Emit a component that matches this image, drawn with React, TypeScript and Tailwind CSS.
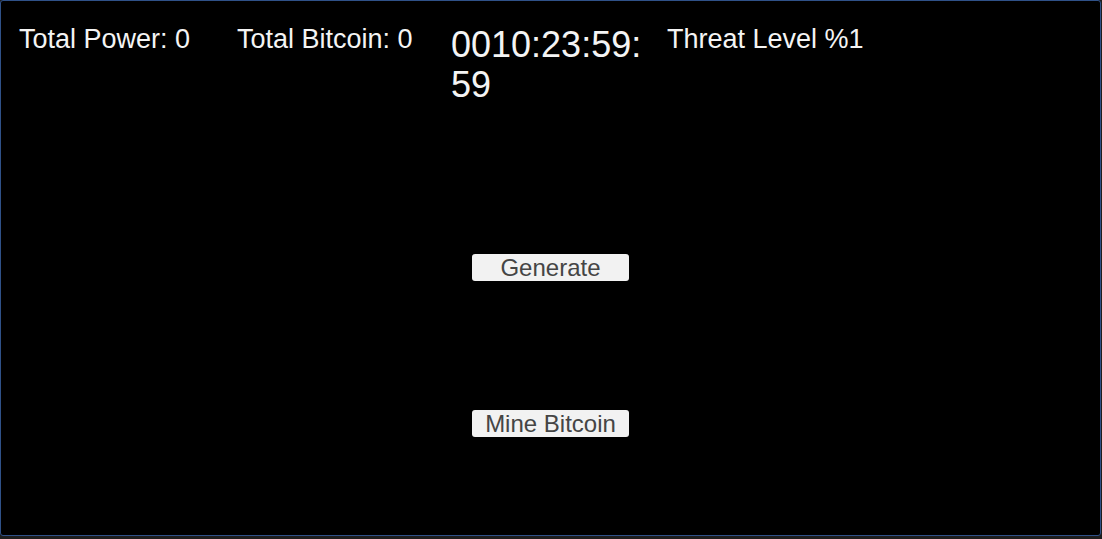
import React from "react";

const App = () => {
  return (
    <div className="w-[1102px] h-[539px] bg-[#1e1e1e] overflow-hidden">
      <div
        className="w-[1101px] h-[536px] bg-black border border-[#2f5188] rounded-[3px] text-[#f4f4f4] flex flex-col"
        style={{ fontFamily: '"Liberation Sans", Arial, sans-serif' }}
      >
        {/* Stats row */}
        <div className="flex items-start pl-[18px] pt-[23px]">
          <div className="w-[218px] text-[27px] leading-[30px]">Total Power: 0</div>
          <div className="w-[214px] text-[27px] leading-[30px]">Total Bitcoin: 0</div>
          <div className="w-[216px] pt-[1px]">
            <div className="w-[200px] text-[36px] leading-[40px] break-all">0010:23:59:59</div>
          </div>
          <div className="text-[27px] leading-[30px]">Threat Level %1</div>
        </div>

        {/* Actions */}
        <div className="flex flex-col items-center mt-[149px] gap-[129px]">
          <button className="w-[157px] h-[27px] bg-[#f2f2f2] rounded-[3px] text-[#454545] text-[24px] leading-[27px]">
            Generate
          </button>
          <button className="w-[157px] h-[27px] bg-[#f2f2f2] rounded-[3px] text-[#454545] text-[24px] leading-[27px]">
            Mine Bitcoin
          </button>
        </div>
      </div>
    </div>
  );
};

export default App;
